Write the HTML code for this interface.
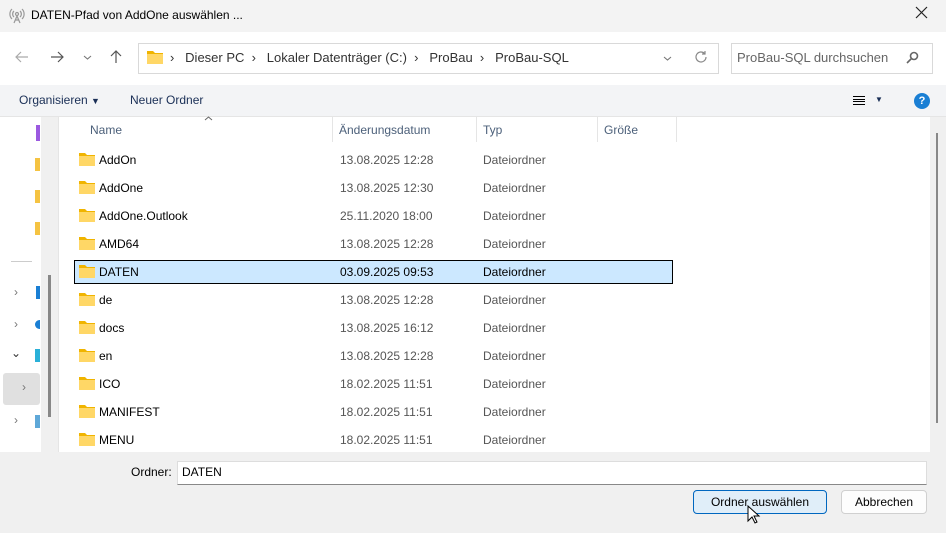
<!DOCTYPE html>
<html><head><meta charset="utf-8"><style>
*{margin:0;padding:0;box-sizing:border-box}
body{width:946px;height:533px;overflow:hidden;background:#f0f0f0;font-family:"Segoe UI","Liberation Sans",sans-serif;font-size:12px;color:#000;position:relative}
.a{position:absolute}
.folder{position:absolute;width:16px;height:13px}
.row{position:absolute;left:74px;width:599px;height:24px}
.row span{position:absolute;top:5px}
.row .n{left:25px;color:#000}
.row .d{left:266px;color:#555}
.row .t{left:409px;color:#555}
</style></head><body>
<div class="a" style="left:0;top:0;width:946px;height:32px;background:#f3f3f3"></div>
<svg class="a" style="left:9px;top:8px" width="16" height="16" viewBox="0 0 16 16" fill="none" stroke="#999" stroke-width="1.2"><circle cx="8" cy="6" r="1.5"/><path d="M5 3a4 4 0 0 0 0 6M11 3a4 4 0 0 1 0 6M3 1a7 7 0 0 0 0 10M13 1a7 7 0 0 1 0 10M8 8l-3 7M8 8l3 7M6 12h4"/></svg>
<div class="a" style="left:31px;top:8px;font-size:12px">DATEN-Pfad von AddOne auswählen ...</div>
<svg class="a" style="left:915px;top:6px" width="13" height="13" viewBox="0 0 13 13" stroke="#222" stroke-width="1.2"><path d="M1 1l11 11M12 1L1 12"/></svg>
<div class="a" style="left:0;top:32px;width:946px;height:53px;background:#fff"></div>
<svg class="a" style="left:15px;top:51px" width="14" height="12" viewBox="0 0 14 12" fill="none" stroke="#aaa" stroke-width="1.2"><path d="M13 6H1M6 1L1 6l5 5"/></svg>
<svg class="a" style="left:50px;top:51px" width="14" height="12" viewBox="0 0 14 12" fill="none" stroke="#555" stroke-width="1.2"><path d="M1 6h12M8 1l5 5-5 5"/></svg>
<svg class="a" style="left:83px;top:55px" width="9" height="5" viewBox="0 0 9 5" fill="none" stroke="#777" stroke-width="1.1"><path d="M1 1l3.5 3L8 1"/></svg>
<svg class="a" style="left:110px;top:50px" width="12" height="14" viewBox="0 0 12 14" fill="none" stroke="#555" stroke-width="1.2"><path d="M6 13V1M1 6l5-5 5 5"/></svg>
<div class="a" style="left:138px;top:43px;width:581px;height:31px;border:1px solid #d9d9d9;background:#fff"></div>
<svg class="a" style="left:147px;top:50px" width="16" height="14" viewBox="0 0 16 14"><path d="M0 1h6l2 2h8v11H0z" fill="#f0b400"/><path d="M0 4h16v10H0z" fill="#ffd766"/></svg>
<div class="a" style="left:170px;top:50px;font-size:13px;color:#333;white-space:nowrap">›&nbsp;&nbsp; Dieser PC &nbsp;›&nbsp;&nbsp; Lokaler Datenträger (C:) &nbsp;›&nbsp;&nbsp; ProBau &nbsp;›&nbsp;&nbsp; ProBau-SQL</div>
<svg class="a" style="left:663px;top:56px" width="9" height="5" viewBox="0 0 9 5" fill="none" stroke="#777" stroke-width="1.1"><path d="M1 1l3.5 3L8 1"/></svg>
<svg class="a" style="left:694px;top:50px" width="14" height="14" viewBox="0 0 14 14" fill="none" stroke="#888" stroke-width="1.2"><path d="M12 7a5 5 0 1 1-1.5-3.6M11 1v3H8"/></svg>
<div class="a" style="left:731px;top:43px;width:202px;height:31px;border:1px solid #d9d9d9;background:#fff"></div>
<div class="a" style="left:737px;top:50px;font-size:13px;color:#666">ProBau-SQL durchsuchen</div>
<svg class="a" style="left:906px;top:51px" width="13" height="13" viewBox="0 0 13 13" fill="none" stroke="#666" stroke-width="1.6"><circle cx="8" cy="5" r="3.5"/><path d="M5.5 7.5L1 12"/></svg>
<div class="a" style="left:0;top:85px;width:946px;height:32px;background:#f3f4f6;border-bottom:1px solid #e5e5e5"></div>
<div class="a" style="left:19px;top:93px;color:#1a2f56">Organisieren <span style="font-size:9px">▼</span></div>
<div class="a" style="left:130px;top:93px;color:#1a2f56">Neuer Ordner</div>
<div class="a" style="left:853px;top:96px;width:12px;height:9px;border-top:1px solid #000;border-bottom:1px solid #000"></div>
<div class="a" style="left:853px;top:99px;width:12px;height:3px;border-top:1px solid #000;border-bottom:1px solid #000"></div>
<div class="a" style="left:875px;top:95px;font-size:8px;color:#1a2f56">▼</div>
<div class="a" style="left:914px;top:93px;width:16px;height:16px;border-radius:50%;background:#1a7fd4;color:#fff;font-size:11px;font-weight:bold;text-align:center;line-height:16px">?</div>
<div class="a" style="left:0;top:117px;width:41px;height:335px;background:#fff"></div>
<div class="a" style="left:41px;top:117px;width:17px;height:335px;background:#f0f0f0"></div>
<div class="a" style="left:48px;top:275px;width:3px;height:142px;background:#888"></div>
<div class="a" style="left:36px;top:125px;width:4px;height:16px;background:#9b59e0"></div>
<div class="a" style="left:35px;top:158px;width:5px;height:13px;background:#f5c342"></div>
<div class="a" style="left:35px;top:190px;width:5px;height:13px;background:#f5c342"></div>
<div class="a" style="left:35px;top:222px;width:5px;height:13px;background:#f5c342"></div>
<div class="a" style="left:11px;top:261px;width:21px;height:1px;background:#ccc"></div>
<div class="a" style="left:14px;top:285px;color:#777">›</div><div class="a" style="left:36px;top:286px;width:4px;height:13px;background:#1a7fd4"></div>
<div class="a" style="left:14px;top:317px;color:#777">›</div><div class="a" style="left:35px;top:320px;width:5px;height:9px;background:#1a7fd4;border-radius:5px 0 0 5px"></div>
<div class="a" style="left:11px;top:346px;color:#333">⌄</div><div class="a" style="left:35px;top:349px;width:5px;height:13px;background:#2ab0d8"></div>
<div class="a" style="left:3px;top:373px;width:37px;height:32px;background:#e0e0e0;border-radius:3px"></div>
<div class="a" style="left:22px;top:380px;color:#777">›</div>
<div class="a" style="left:14px;top:413px;color:#777">›</div><div class="a" style="left:35px;top:415px;width:5px;height:13px;background:#5fa8d8"></div>
<div class="a" style="left:58px;top:117px;width:872px;height:335px;background:#fff;border-left:1px solid #e5e5e5"></div>
<div class="a" style="left:930px;top:117px;width:16px;height:335px;background:#f0f0f0"></div>
<div class="a" style="left:936px;top:133px;width:2px;height:290px;background:#888"></div>
<div class="a" style="left:90px;top:123px;color:#4c607a">Name</div>
<svg class="a" style="left:204px;top:116px" width="9" height="5" viewBox="0 0 9 5" fill="none" stroke="#666" stroke-width="1"><path d="M1 4l3.5-3L8 4"/></svg>
<div class="a" style="left:332px;top:117px;width:1px;height:25px;background:#e5e5e5"></div>
<div class="a" style="left:339px;top:123px;color:#4c607a">Änderungsdatum</div>
<div class="a" style="left:476px;top:117px;width:1px;height:25px;background:#e5e5e5"></div>
<div class="a" style="left:483px;top:123px;color:#4c607a">Typ</div>
<div class="a" style="left:597px;top:117px;width:1px;height:25px;background:#e5e5e5"></div>
<div class="a" style="left:604px;top:123px;color:#4c607a">Größe</div>
<div class="a" style="left:676px;top:117px;width:1px;height:25px;background:#e5e5e5"></div>

<div class="row" style="top:148px"><svg class="folder" style="left:5px;top:5px" viewBox="0 0 16 13"><path d="M0 0h6l2 2h8v11H0z" fill="#f0b400"/><path d="M0 3h16v10H0z" fill="#ffd766"/></svg><span class="n">AddOn</span><span class="d">13.08.2025 12:28</span><span class="t">Dateiordner</span></div>
<div class="row" style="top:176px"><svg class="folder" style="left:5px;top:5px" viewBox="0 0 16 13"><path d="M0 0h6l2 2h8v11H0z" fill="#f0b400"/><path d="M0 3h16v10H0z" fill="#ffd766"/></svg><span class="n">AddOne</span><span class="d">13.08.2025 12:30</span><span class="t">Dateiordner</span></div>
<div class="row" style="top:204px"><svg class="folder" style="left:5px;top:5px" viewBox="0 0 16 13"><path d="M0 0h6l2 2h8v11H0z" fill="#f0b400"/><path d="M0 3h16v10H0z" fill="#ffd766"/></svg><span class="n">AddOne.Outlook</span><span class="d">25.11.2020 18:00</span><span class="t">Dateiordner</span></div>
<div class="row" style="top:232px"><svg class="folder" style="left:5px;top:5px" viewBox="0 0 16 13"><path d="M0 0h6l2 2h8v11H0z" fill="#f0b400"/><path d="M0 3h16v10H0z" fill="#ffd766"/></svg><span class="n">AMD64</span><span class="d">13.08.2025 12:28</span><span class="t">Dateiordner</span></div>
<div class="row" style="top:260px;background:#cce8ff;border:1px solid #000"><svg class="folder" style="left:4px;top:4px" viewBox="0 0 16 13"><path d="M0 0h6l2 2h8v11H0z" fill="#f0b400"/><path d="M0 3h16v10H0z" fill="#ffd766"/></svg><span class="n" style="left:24px;top:4px">DATEN</span><span class="d" style="left:265px;top:4px;color:#000">03.09.2025 09:53</span><span class="t" style="left:408px;top:4px;color:#000">Dateiordner</span></div>
<div class="row" style="top:288px"><svg class="folder" style="left:5px;top:5px" viewBox="0 0 16 13"><path d="M0 0h6l2 2h8v11H0z" fill="#f0b400"/><path d="M0 3h16v10H0z" fill="#ffd766"/></svg><span class="n">de</span><span class="d">13.08.2025 12:28</span><span class="t">Dateiordner</span></div>
<div class="row" style="top:316px"><svg class="folder" style="left:5px;top:5px" viewBox="0 0 16 13"><path d="M0 0h6l2 2h8v11H0z" fill="#f0b400"/><path d="M0 3h16v10H0z" fill="#ffd766"/></svg><span class="n">docs</span><span class="d">13.08.2025 16:12</span><span class="t">Dateiordner</span></div>
<div class="row" style="top:344px"><svg class="folder" style="left:5px;top:5px" viewBox="0 0 16 13"><path d="M0 0h6l2 2h8v11H0z" fill="#f0b400"/><path d="M0 3h16v10H0z" fill="#ffd766"/></svg><span class="n">en</span><span class="d">13.08.2025 12:28</span><span class="t">Dateiordner</span></div>
<div class="row" style="top:372px"><svg class="folder" style="left:5px;top:5px" viewBox="0 0 16 13"><path d="M0 0h6l2 2h8v11H0z" fill="#f0b400"/><path d="M0 3h16v10H0z" fill="#ffd766"/></svg><span class="n">ICO</span><span class="d">18.02.2025 11:51</span><span class="t">Dateiordner</span></div>
<div class="row" style="top:400px"><svg class="folder" style="left:5px;top:5px" viewBox="0 0 16 13"><path d="M0 0h6l2 2h8v11H0z" fill="#f0b400"/><path d="M0 3h16v10H0z" fill="#ffd766"/></svg><span class="n">MANIFEST</span><span class="d">18.02.2025 11:51</span><span class="t">Dateiordner</span></div>
<div class="row" style="top:428px"><svg class="folder" style="left:5px;top:5px" viewBox="0 0 16 13"><path d="M0 0h6l2 2h8v11H0z" fill="#f0b400"/><path d="M0 3h16v10H0z" fill="#ffd766"/></svg><span class="n">MENU</span><span class="d">18.02.2025 11:51</span><span class="t">Dateiordner</span></div>
<div class="a" style="left:131px;top:465px">Ordner:</div>
<div class="a" style="left:177px;top:461px;width:750px;height:24px;background:#fff;border:1px solid #ddd;border-bottom-color:#888"></div>
<div class="a" style="left:182px;top:465px">DATEN</div>
<div class="a" style="left:693px;top:490px;width:134px;height:24px;background:#e0eef9;border:1px solid #0067c0;border-radius:4px;text-align:center;line-height:22px">Ordner auswählen</div>
<div class="a" style="left:841px;top:490px;width:86px;height:24px;background:#fdfdfd;border:1px solid #d0d0d0;border-radius:4px;text-align:center;line-height:22px">Abbrechen</div>
<svg class="a" style="left:747px;top:505px" width="14" height="20" viewBox="0 0 14 20"><path d="M1 1v15l4-4 3 6 2-1-3-6h5z" fill="#fff" stroke="#000"/></svg>
</body></html>
